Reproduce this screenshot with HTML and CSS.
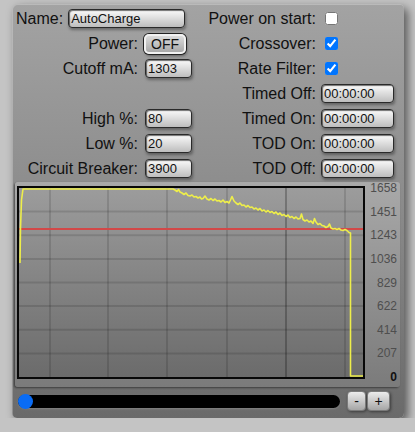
FILE: index.html
```html
<!DOCTYPE html>
<html>
<head>
  <meta charset="UTF-8">
  <title>AutoCharge</title>
  <link rel="stylesheet" href="styles.css">
</head>
<body>
  <div class="panel">
    <div class="form">
      <div class="name-field">
        <label>Name:</label>
        <input type="text" class="text name" value="AutoCharge">
      </div>
      <label class="lbl side">Power on start:</label>
      <div class="ctl"><input type="checkbox" class="check"></div>

      <label class="lbl">Power:</label>
      <div class="ctl"><button class="toggle">OFF</button></div>
      <label class="lbl side">Crossover:</label>
      <div class="ctl"><input type="checkbox" class="check" checked></div>

      <label class="lbl">Cutoff mA:</label>
      <div class="ctl"><input type="text" class="text num" value="1303"></div>
      <label class="lbl side">Rate Filter:</label>
      <div class="ctl"><input type="checkbox" class="check" checked></div>

      <div></div>
      <div></div>
      <label class="lbl side">Timed Off:</label>
      <div class="ctl"><input type="text" class="text time" value="00:00:00"></div>

      <label class="lbl">High %:</label>
      <div class="ctl"><input type="text" class="text num" value="80"></div>
      <label class="lbl side">Timed On:</label>
      <div class="ctl"><input type="text" class="text time" value="00:00:00"></div>

      <label class="lbl">Low %:</label>
      <div class="ctl"><input type="text" class="text num" value="20"></div>
      <label class="lbl side">TOD On:</label>
      <div class="ctl"><input type="text" class="text time" value="00:00:00"></div>

      <label class="lbl">Circuit Breaker:</label>
      <div class="ctl"><input type="text" class="text num" value="3900"></div>
      <label class="lbl side">TOD Off:</label>
      <div class="ctl"><input type="text" class="text time" value="00:00:00"></div>
    </div>

    <div class="chart">
      <div class="plot">
        <svg width="344" height="189" viewBox="0 0 344 189">
          <!-- grid -->
          <g stroke="rgba(0,0,0,0.12)" stroke-width="2">
            <line x1="31" y1="0" x2="31" y2="189"/>
            <line x1="89" y1="0" x2="89" y2="189"/>
            <line x1="148" y1="0" x2="148" y2="189"/>
            <line x1="208" y1="0" x2="208" y2="189"/>
            <line x1="326" y1="0" x2="326" y2="189"/>
            <line x1="0" y1="23.6" x2="344" y2="23.6"/>
            <line x1="0" y1="47.3" x2="344" y2="47.3"/>
            <line x1="0" y1="70.9" x2="344" y2="70.9"/>
            <line x1="0" y1="94.5" x2="344" y2="94.5"/>
            <line x1="0" y1="118.1" x2="344" y2="118.1"/>
            <line x1="0" y1="141.8" x2="344" y2="141.8"/>
            <line x1="0" y1="165.4" x2="344" y2="165.4"/>
          </g>
          <!-- cursor -->
          <line x1="267" y1="0" x2="267" y2="189" stroke="rgba(0,0,0,0.32)" stroke-width="1.5"/>
          <!-- cutoff level -->
          <line x1="0" y1="41" x2="344" y2="41" stroke="#d24848" stroke-width="2"/>
          <!-- current trace -->
          <polyline fill="none" stroke="#eeee4a" stroke-width="1.6" stroke-linejoin="round"
            points="1,75 1.5,40 2.5,12 4,1 154,1 156,2 158,3.5 159.5,1.5 161,4 163,5 165,6.5 167,5 169,7.5 171,8 173,7 175,9 177,8.5 179,10 181,9 182.5,11 184,10.5 186,8 188,11 190,12 192,10.5 194,12.5 196,11 198,13 200,12.5 202,14 204,12 206,14.5 208,13.5 210,15 211.5,12 213,8.5 215,13 217,15 219,16.5 221,15 223,17.5 225,17 227,19 229,17.5 231,19.5 233,19 235,21 237,20 239,22 241,20.5 243,23 245,22 247,24 249,22.5 251,24.5 253,23.5 255,25.5 257,24 259,26.5 261,25 263,27.5 265,26.5 267,28.5 269,27 271,29.5 273,28.5 275,30.5 277,29 279,31 281,30.5 282.5,26 284,31.5 286,33 288,32 290,34 292,33 294,35.5 295.5,30.5 297,34 299,36.5 301,35.5 303,37.5 305,38 307,39.5 309,38.5 310.5,36 312,40 314,41 316,40.5 318,41.5 320,40.5 322,42 324,42.5 326,41.5 328,42.5 330,44.5 331.5,45 331.5,188 344,188"/>
        </svg>
      </div>
      <div class="axis">
        <span>1658</span>
        <span>1451</span>
        <span>1243</span>
        <span>1036</span>
        <span>829</span>
        <span>622</span>
        <span>414</span>
        <span>207</span>
        <span class="zero">0</span>
      </div>
    </div>

    <div class="scroller">
      <input type="range" class="slider" min="0" max="100" value="0">
      <button class="step minus">-</button>
      <button class="step plus">+</button>
    </div>
  </div>
</body>
</html>
```

FILE: styles.css
```css
body {
  margin: 0;
  background: #c4c4c4;
  font-family: "Liberation Sans", Arial, sans-serif;
}
.panel {
  box-sizing: border-box;
  width: 392px;
  margin: 4px 0 0 12px;
  padding: 2px 4px 7px 4px;
  border-radius: 5px;
  background: linear-gradient(#a3a3a3, #8a8a8a 50%, #6a6a6a);
  box-shadow: inset 1px 1px 0 rgba(255, 255, 255, 0.25), 4px 4px 10px rgba(0, 0, 0, 0.55);
}
.form {
  display: grid;
  grid-template-columns: 125px 59px 116px 1fr;
  grid-auto-rows: 25px;
  align-items: center;
}
.name-field {
  grid-column: span 2;
  display: flex;
  align-items: center;
}
label {
  font-size: 16px;
  color: #111;
}
.lbl {
  text-align: right;
  padding-right: 3px;
}
.lbl.side {
  padding-right: 0;
}
.ctl {
  display: flex;
  align-items: center;
}
.text {
  box-sizing: border-box;
  height: 19px;
  padding: 0 2px;
  margin-left: 4px;
  border: 1px solid #2a2a2a;
  border-radius: 4px;
  background: linear-gradient(#fbfbfb, #bdbdbd);
  box-shadow: inset 1px 1px 1px rgba(0, 0, 0, 0.55), 1px 2px 3px rgba(0, 0, 0, 0.35);
  font-family: "Liberation Sans", Arial, sans-serif;
  font-size: 13px;
  color: #111;
  outline: none;
}
.name {
  width: 117px;
  margin-left: 5px;
}
.num {
  width: 47px;
}
.time {
  width: 73px;
  margin-left: 5px;
}
.check {
  width: 13px;
  height: 13px;
  margin: 0 0 0 9px;
  accent-color: #0075ff;
}
.toggle {
  box-sizing: border-box;
  width: 42px;
  height: 20px;
  margin-left: 3px;
  padding: 0;
  border: 2px solid #f2f2f2;
  border-radius: 5px;
  background: linear-gradient(#dcdcdc, #a9a9a9);
  box-shadow: 0 0 0 1px #222, 1px 2px 3px rgba(0, 0, 0, 0.4);
  font-family: "Liberation Sans", Arial, sans-serif;
  font-size: 14px;
  color: #111;
}
.chart {
  display: flex;
  height: 201px;
  margin: 1px 0 0 -1px;
  padding: 4px 0 0 2px;
  border-radius: 3px;
  overflow: hidden;
  background: linear-gradient(#a9a9a9, #7b7b7b);
  box-shadow: -1px 1px 2px rgba(0, 0, 0, 0.45);
}
.plot {
  width: 344px;
  height: 189px;
  border: 2px solid #080808;
  background: linear-gradient(#9c9c9c, #6b6b6b);
}
.plot svg {
  display: block;
}
.axis {
  flex: 1;
  display: flex;
  flex-direction: column;
  justify-content: space-between;
  height: 203px;
  margin-top: -5px;
  padding-right: 3px;
  text-align: right;
  font-size: 12px;
  line-height: 14px;
  color: #4e4e4e;
}
.axis .zero {
  color: #111;
  font-weight: bold;
}
.scroller {
  display: flex;
  align-items: center;
  height: 20px;
  margin-top: 4px;
}
.slider {
  -webkit-appearance: none;
  appearance: none;
  width: 322px;
  height: 13px;
  margin: 0 0 0 2px;
  border-radius: 7px;
  background: #000;
  box-shadow: 0 1px 2px rgba(255, 255, 255, 0.15);
}
.slider::-webkit-slider-thumb {
  -webkit-appearance: none;
  width: 15px;
  height: 15px;
  border-radius: 50%;
  background: #0a6cf5;
  cursor: pointer;
}
.step {
  box-sizing: border-box;
  height: 20px;
  padding: 0;
  border: 1px solid #7a7a7a;
  border-radius: 4px;
  background: linear-gradient(#ececec, #a6a6a6);
  box-shadow: 1px 1px 3px rgba(0, 0, 0, 0.45);
  font-family: "Liberation Sans", Arial, sans-serif;
  font-size: 14px;
  color: #111;
  cursor: pointer;
}
.minus {
  width: 19px;
  margin-left: 7px;
}
.plus {
  width: 23px;
  margin-left: 1px;
}
```
